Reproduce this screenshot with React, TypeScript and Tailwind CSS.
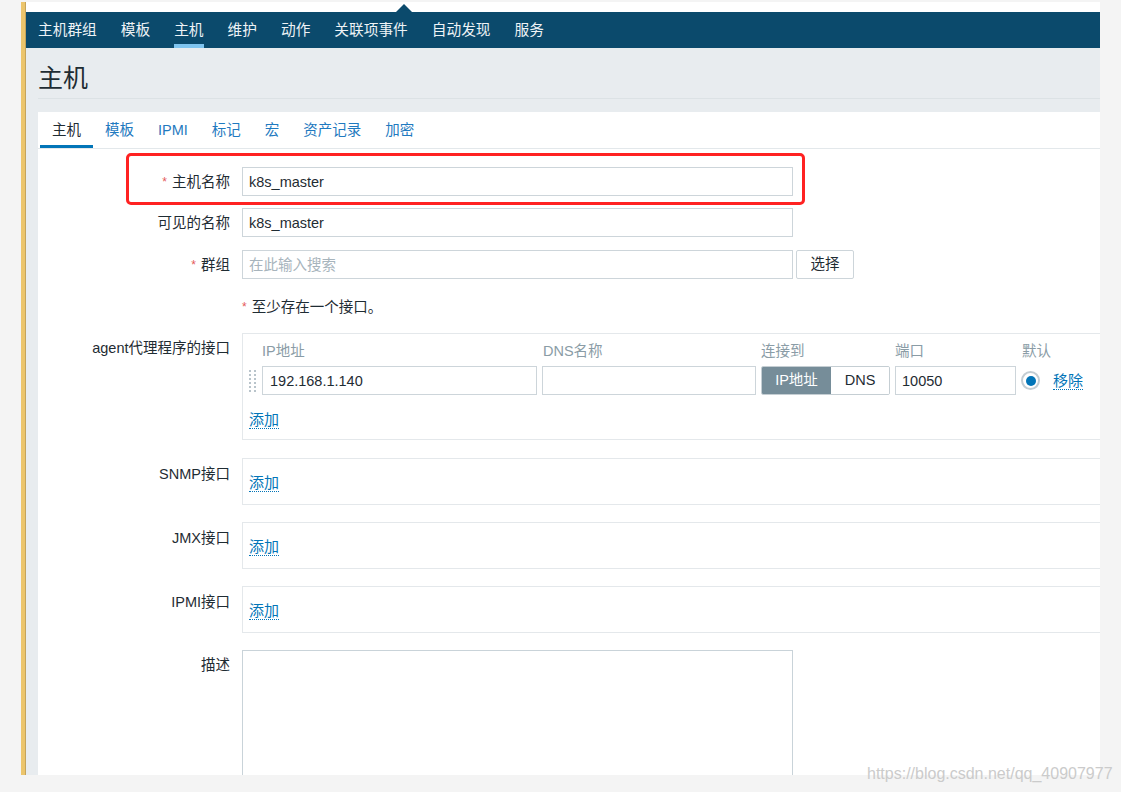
import React from 'react';

const navItems = ['主机群组', '模板', '主机', '维护', '动作', '关联项事件', '自动发现', '服务'];
const tabs = ['主机', '模板', 'IPMI', '标记', '宏', '资产记录', '加密'];

const inputCls =
  'h-[29px] border border-[#cdd5da] bg-white px-[6px] text-[14.5px] text-[#1f2c33] outline-none placeholder:text-[#a7b4bc]';

function Req() {
  return <span className="mr-[5px] text-[12px] text-[#e45959] align-top">*</span>;
}

function AddLink() {
  return (
    <span className="inline-block border-b border-dotted border-[#0275b8] text-[15px] leading-[17px] text-[#0275b8]">
      添加
    </span>
  );
}

// empty interface block (SNMP / JMX / IPMI)
function IfaceRow({ label }: { label: string }) {
  return (
    <div className="mt-[17px] flex gap-[12px]">
      <div className="w-[192px] shrink-0 pt-[6px] text-right leading-[20px]">{label}</div>
      <div className="h-[47px] flex-1 border border-r-0 border-[#e4e8eb] pl-[6px] pt-[14px]">
        <AddLink />
      </div>
    </div>
  );
}

export default function App() {
  return (
    <div className="relative h-[792px] w-[1121px] overflow-hidden bg-[#f4f4f4] font-['Liberation_Sans','Noto_Sans_CJK_SC',sans-serif] text-[#1f2c33]">
      <div className="flex h-[775px] pt-[2px]">
        <div className="w-[21px] shrink-0" />
        <div className="w-[5px] shrink-0 border-r border-[#c4a45c] bg-[#ecc56c]" />
        <div className="flex w-[1074px] shrink-0 flex-col bg-[#e8ecef]">
          {/* top strip with pointer */}
          <div className="relative h-[10px] shrink-0 bg-white">
            <div className="absolute bottom-0 left-[370px] h-0 w-0 border-x-[8px] border-b-[8px] border-x-transparent border-b-[#0b4a6c]" />
          </div>

          <nav className="flex h-[36px] shrink-0 bg-[#0b4a6c]">
            {navItems.map((item) => (
              <div key={item} className="relative px-[12px] pt-[1px] text-[14.7px] leading-[35px] text-[#eef3f6]">
                {item}
                {item === '主机' && (
                  <div className="absolute bottom-0 left-[12px] right-[12px] h-[4px] bg-[#7fc4ef]" />
                )}
              </div>
            ))}
          </nav>

          <div className="ml-[12px] flex min-h-0 flex-1 flex-col">
            <div className="h-[51px] shrink-0 border-b border-[#dce2e5] pt-[15px] text-[25px] leading-[30px]">
              主机
            </div>

            <div className="mt-[13px] flex min-h-0 flex-1 flex-col overflow-hidden bg-white">
              <div className="flex h-[37px] shrink-0 border-b border-[#e3e8eb] pl-[2px]">
                {tabs.map((t, i) => (
                  <div
                    key={t}
                    className={`relative px-[12px] pt-[1px] text-[14.5px] leading-[35px] ${i === 0 ? 'text-[#1f2c33]' : 'text-[#1f7ac0]'}`}
                  >
                    {t}
                    {i === 0 && <div className="absolute bottom-0 left-0 right-0 h-[3px] bg-[#0275b8]" />}
                  </div>
                ))}
              </div>

              <div className="flex flex-col pt-[18px] text-[14.5px]">
                <div className="flex gap-[12px]">
                  <div className="relative top-[1px] w-[192px] shrink-0 text-right leading-[29px]">
                    <Req />主机名称
                  </div>
                  <input readOnly value="k8s_master" className={`${inputCls} w-[551px]`} />
                </div>

                <div className="mt-[12px] flex gap-[12px]">
                  <div className="relative top-[1px] w-[192px] shrink-0 text-right leading-[29px]">可见的名称</div>
                  <input readOnly value="k8s_master" className={`${inputCls} w-[551px]`} />
                </div>

                <div className="mt-[13px] flex gap-[12px]">
                  <div className="relative top-[1px] w-[192px] shrink-0 text-right leading-[29px]">
                    <Req />群组
                  </div>
                  <div className="flex gap-[3px]">
                    <input readOnly placeholder="在此输入搜索" className={`${inputCls} w-[551px]`} />
                    <button className="h-[29px] w-[58px] rounded-[2px] border border-[#cdd5da] bg-white text-[14.5px] text-[#1f2c33]">
                      选择
                    </button>
                  </div>
                </div>

                <div className="ml-[204px] mt-[18px] leading-[20px]">
                  <Req />至少存在一个接口。
                </div>

                {/* agent interfaces */}
                <div className="mt-[16px] flex gap-[12px]">
                  <div className="w-[192px] shrink-0 pt-[5px] text-right leading-[20px]">agent代理程序的接口</div>
                  <div className="flex-1 border border-r-0 border-[#e4e8eb] pb-[10px] pl-[6px] pt-[8px]">
                    <div className="flex gap-[5px] leading-[18px] text-[#8a9ca6]">
                      <div className="w-[8px]" />
                      <div className="w-[275px]">IP地址</div>
                      <div className="w-[214px] pl-[1px]">DNS名称</div>
                      <div className="w-[129px]">连接到</div>
                      <div className="w-[121px]">端口</div>
                      <div className="pl-[1px]">默认</div>
                    </div>
                    <div className="mt-[6px] flex items-center gap-[5px]">
                      <svg width="8" height="22" viewBox="0 0 8 22" className="shrink-0">
                        {[0, 4, 8, 12, 16, 20].map((y) => (
                          <g key={y} fill="#b9c4cb">
                            <rect x="0" y={y} width="2" height="2" />
                            <rect x="5" y={y} width="2" height="2" />
                          </g>
                        ))}
                      </svg>
                      <input readOnly value="192.168.1.140" className={`${inputCls} w-[275px] pl-[7px]`} />
                      <input readOnly value="" className={`${inputCls} w-[214px]`} />
                      <div className="flex h-[29px] w-[129px] overflow-hidden rounded-[2px] border border-[#c5ced3]">
                        <div className="flex w-[69px] items-center justify-center bg-[#768d99] text-white">IP地址</div>
                        <div className="flex flex-1 items-center justify-center bg-white">DNS</div>
                      </div>
                      <input readOnly value="10050" className={`${inputCls} w-[121px]`} />
                      <div className="flex h-[19px] w-[19px] items-center justify-center rounded-full border-2 border-[#c3cdd3] bg-white">
                        <div className="h-[10px] w-[10px] rounded-full bg-[#0275b8]" />
                      </div>
                      <span className="ml-[8px] inline-block border-b border-dotted border-[#0275b8] text-[15px] leading-[17px] text-[#0275b8]">
                        移除
                      </span>
                    </div>
                    <div className="mt-[16px] leading-[18px]">
                      <AddLink />
                    </div>
                  </div>
                </div>

                <div className="mt-[1px]" />
                <IfaceRow label="SNMP接口" />
                <IfaceRow label="JMX接口" />
                <IfaceRow label="IPMI接口" />

                <div className="mt-[17px] flex gap-[12px]">
                  <div className="w-[192px] shrink-0 pt-[5px] text-right leading-[20px]">描述</div>
                  <textarea
                    readOnly
                    className="h-[160px] w-[551px] resize-none border border-[#c9d3d9] bg-white outline-none"
                  />
                </div>
              </div>
            </div>
          </div>
        </div>
      </div>

      {/* red annotation box */}
      <div className="pointer-events-none absolute left-[126px] top-[153px] h-[52px] w-[679px] rounded-[5px] border-[3px] border-[#ff2222]" />

      {/* watermark */}
      <div className="pointer-events-none absolute left-[867px] top-[764px] text-[16px] leading-[20px] text-[#cbcbcb]">
        https://blog.csdn.net/qq_40907977
      </div>
    </div>
  );
}
